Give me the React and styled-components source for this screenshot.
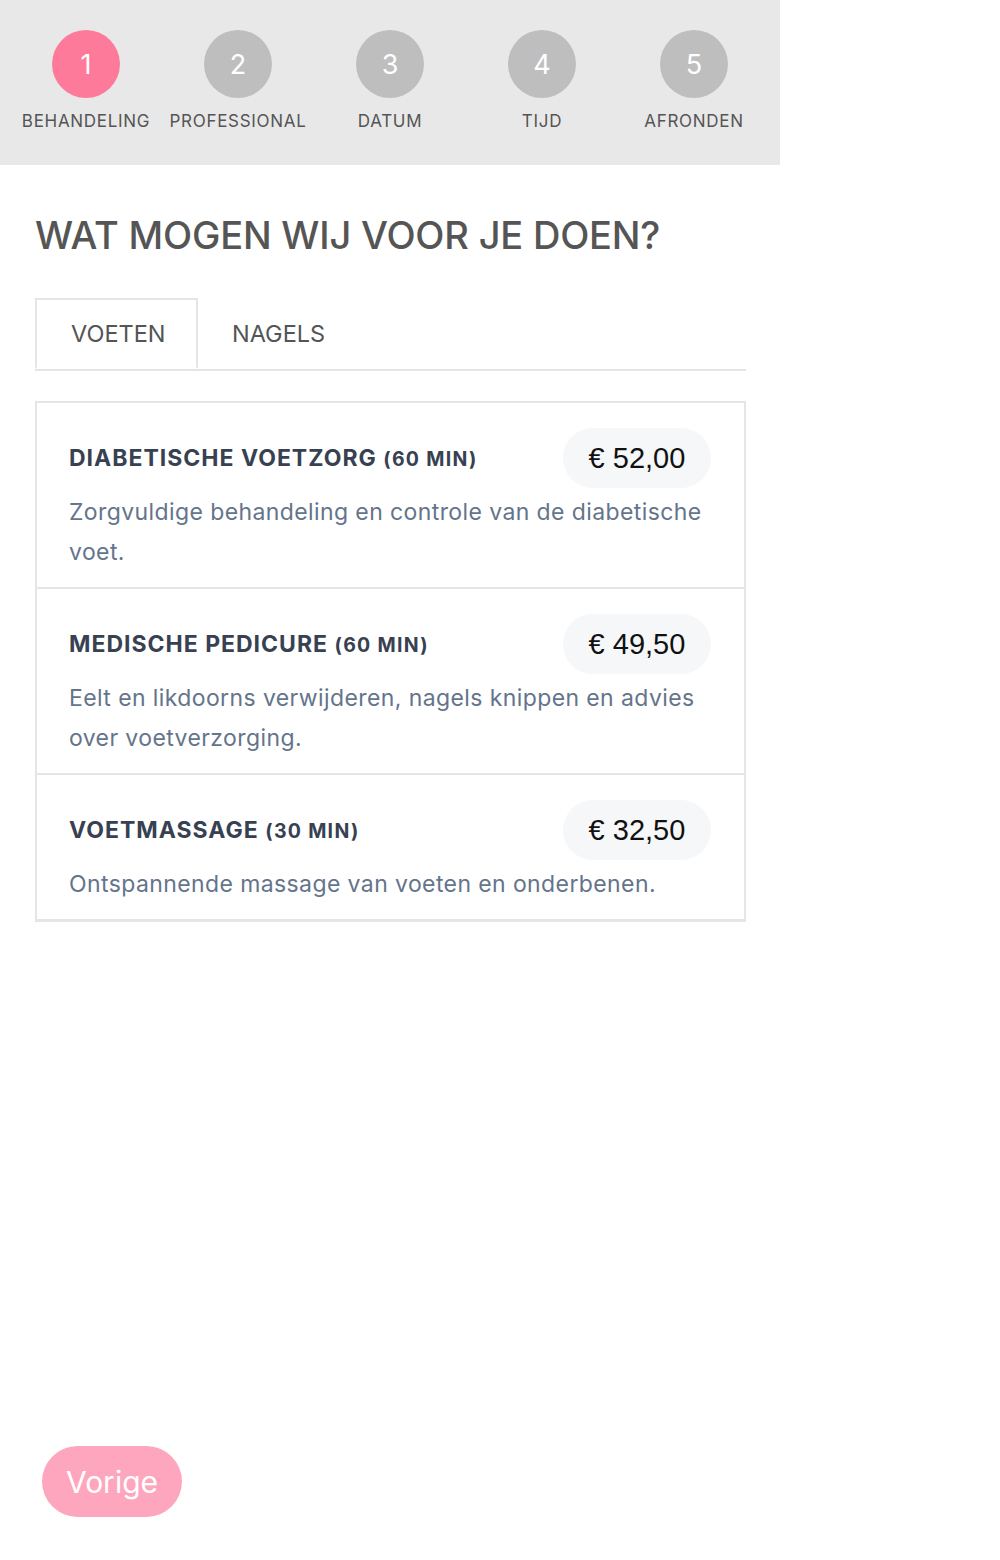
import React from 'react';
import styled, { createGlobalStyle } from 'styled-components';

const Global = createGlobalStyle`
  body {
    margin: 0;
    background: #fff;
    font-family: Inter, 'Noto Sans', sans-serif;
  }
`;

const Page = styled.div`
  width: 780px;
  min-height: 1560px;
  display: flex;
  flex-direction: column;
`;

const Steps = styled.div`
  height: 165px;
  background: #e8e8e8;
  padding: 0 10px;
  box-sizing: border-box;
  display: grid;
  grid-template-columns: repeat(5, 1fr);
`;

const Step = styled.div`
  display: flex;
  flex-direction: column;
  align-items: center;
  padding-top: 30px;
`;

const Circle = styled.div`
  width: 68px;
  height: 68px;
  border-radius: 50%;
  background: ${(p) => (p.$active ? '#fe7a9b' : '#bebebe')};
  color: #fff;
  font-size: 27px;
  display: flex;
  align-items: center;
  justify-content: center;
`;

const StepLabel = styled.div`
  margin-top: 13px;
  font-size: 17px;
  letter-spacing: 0.7px;
  color: #555;
`;

const Content = styled.div`
  padding: 0 34px 0 35px;
  display: flex;
  flex-direction: column;
  flex: 1;
`;

const Heading = styled.h1`
  margin: 47px 0 0;
  font-size: 38px;
  font-weight: 500;
  color: #555;
  line-height: 46px;
  letter-spacing: -0.2px;
`;

const Tabs = styled.div`
  margin-top: 40px;
  display: flex;
  border-bottom: 2px solid #e3e5e8;
`;

const Tab = styled.div`
  width: ${(p) => (p.$active ? '163px' : 'auto')};
  box-sizing: border-box;
  height: 71px;
  margin-bottom: ${(p) => (p.$active ? '-2px' : '0')};
  padding: 0 34px;
  display: flex;
  align-items: center;
  font-size: 23.5px;
  color: #555;
  border: ${(p) => (p.$active ? '2px solid #e3e5e8' : '0')};
  border-bottom-color: #fff;
  background: #fff;
`;

const List = styled.div`
  margin-top: 30px;
  border: 2px solid #e3e5e8;
  border-bottom-width: 1px;
`;

const Item = styled.div`
  padding: 25px 33px 15px 32px;
  border-bottom: 2px solid #e3e5e8;
`;

const ItemHead = styled.div`
  display: flex;
  align-items: center;
  justify-content: space-between;
`;

const Name = styled.div`
  font-size: 23px;
  font-weight: 700;
  color: #374151;
  letter-spacing: 1px;
`;

const Duration = styled.span`
  font-size: 19.5px;
  letter-spacing: 1.3px;
`;

const Price = styled.div`
  width: 148px;
  height: 60px;
  border-radius: 30px;
  background: #f6f7f9;
  display: flex;
  align-items: center;
  justify-content: center;
  font-family: 'Liberation Sans', Arial, sans-serif;
  font-size: 29px;
  color: #111;
`;

const Desc = styled.p`
  margin: 4px 0 0;
  font-size: 23px;
  line-height: 40px;
  letter-spacing: 0.4px;
  color: #64748b;
`;

const Footer = styled.div`
  margin-top: auto;
  padding: 0 0 43px 7px;
`;

const Back = styled.button`
  width: 140px;
  height: 71px;
  border: 0;
  border-radius: 36px;
  background: #ffa6bf;
  color: #fff;
  font-family: Inter, sans-serif;
  font-size: 30px;
`;

const steps = ['BEHANDELING', 'PROFESSIONAL', 'DATUM', 'TIJD', 'AFRONDEN'];

const items = [
  {
    name: 'DIABETISCHE VOETZORG',
    min: 60,
    price: '€ 52,00',
    desc: 'Zorgvuldige behandeling en controle van de diabetische voet.',
  },
  {
    name: 'MEDISCHE PEDICURE',
    min: 60,
    price: '€ 49,50',
    desc: 'Eelt en likdoorns verwijderen, nagels knippen en advies over voetverzorging.',
  },
  {
    name: 'VOETMASSAGE',
    min: 30,
    price: '€ 32,50',
    desc: 'Ontspannende massage van voeten en onderbenen.',
  },
];

export default function App() {
  return (
    <Page>
      <Global />
      <Steps>
        {steps.map((s, i) => (
          <Step key={s}>
            <Circle $active={i === 0}>{i + 1}</Circle>
            <StepLabel>{s}</StepLabel>
          </Step>
        ))}
      </Steps>
      <Content>
        <Heading>WAT MOGEN WIJ VOOR JE DOEN?</Heading>
        <Tabs>
          <Tab $active>VOETEN</Tab>
          <Tab>NAGELS</Tab>
        </Tabs>
        <List>
          {items.map((it) => (
            <Item key={it.name}>
              <ItemHead>
                <Name>
                  {it.name} <Duration>({it.min} MIN)</Duration>
                </Name>
                <Price>{it.price}</Price>
              </ItemHead>
              <Desc>{it.desc}</Desc>
            </Item>
          ))}
        </List>
        <Footer>
          <Back>Vorige</Back>
        </Footer>
      </Content>
    </Page>
  );
}
